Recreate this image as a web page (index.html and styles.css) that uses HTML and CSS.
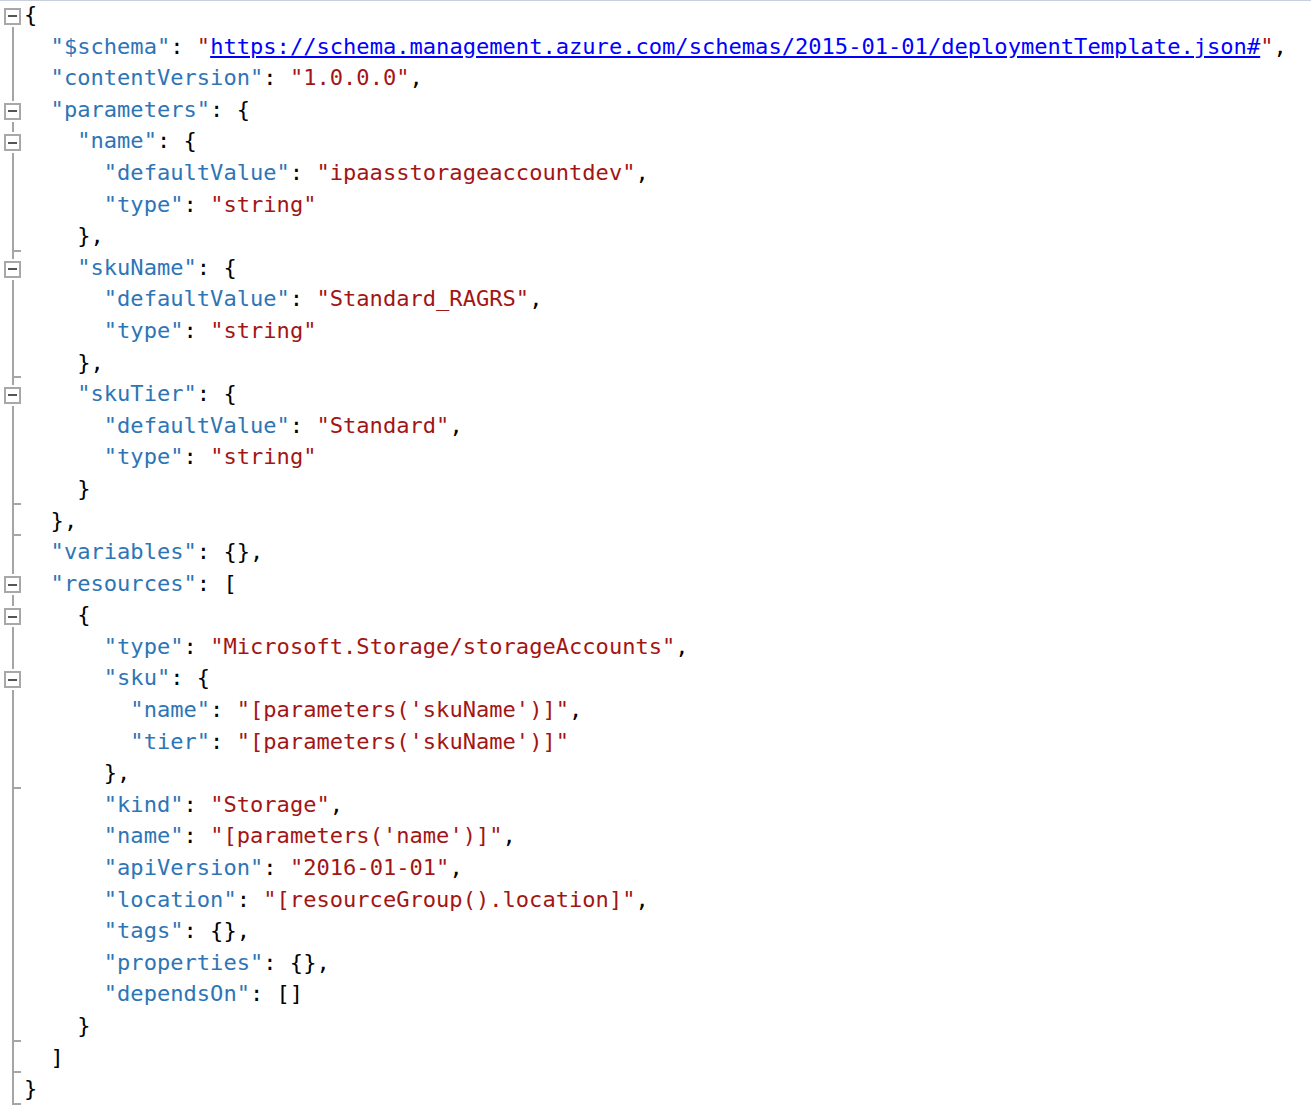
FILE: index.html
```html
<!DOCTYPE html>
<html>
<head>
<meta charset="utf-8">
<link rel="stylesheet" href="styles.css">
</head>
<body>
<div class="editor">
<div class="line"><span class="g first"><i class="box"></i></span><span class="code">{</span></div>
<div class="line"><span class="g bar"></span><span class="code">  <span class="k">"$schema"</span>: <span class="s">"<span class="u">https://schema.management.azure.com/schemas/2015-01-01/deploymentTemplate.json#</span>"</span>,</span></div>
<div class="line"><span class="g bar"></span><span class="code">  <span class="k">"contentVersion"</span>: <span class="s">"1.0.0.0"</span>,</span></div>
<div class="line"><span class="g bar"><i class="box"></i></span><span class="code">  <span class="k">"parameters"</span>: {</span></div>
<div class="line"><span class="g bar"><i class="box"></i></span><span class="code">    <span class="k">"name"</span>: {</span></div>
<div class="line"><span class="g bar"></span><span class="code">      <span class="k">"defaultValue"</span>: <span class="s">"ipaasstorageaccountdev"</span>,</span></div>
<div class="line"><span class="g bar"></span><span class="code">      <span class="k">"type"</span>: <span class="s">"string"</span></span></div>
<div class="line"><span class="g end"></span><span class="code">    },</span></div>
<div class="line"><span class="g bar"><i class="box"></i></span><span class="code">    <span class="k">"skuName"</span>: {</span></div>
<div class="line"><span class="g bar"></span><span class="code">      <span class="k">"defaultValue"</span>: <span class="s">"Standard_RAGRS"</span>,</span></div>
<div class="line"><span class="g bar"></span><span class="code">      <span class="k">"type"</span>: <span class="s">"string"</span></span></div>
<div class="line"><span class="g end"></span><span class="code">    },</span></div>
<div class="line"><span class="g bar"><i class="box"></i></span><span class="code">    <span class="k">"skuTier"</span>: {</span></div>
<div class="line"><span class="g bar"></span><span class="code">      <span class="k">"defaultValue"</span>: <span class="s">"Standard"</span>,</span></div>
<div class="line"><span class="g bar"></span><span class="code">      <span class="k">"type"</span>: <span class="s">"string"</span></span></div>
<div class="line"><span class="g end"></span><span class="code">    }</span></div>
<div class="line"><span class="g end"></span><span class="code">  },</span></div>
<div class="line"><span class="g bar"></span><span class="code">  <span class="k">"variables"</span>: {},</span></div>
<div class="line"><span class="g bar"><i class="box"></i></span><span class="code">  <span class="k">"resources"</span>: [</span></div>
<div class="line"><span class="g bar"><i class="box"></i></span><span class="code">    {</span></div>
<div class="line"><span class="g bar"></span><span class="code">      <span class="k">"type"</span>: <span class="s">"Microsoft.Storage/storageAccounts"</span>,</span></div>
<div class="line"><span class="g bar"><i class="box"></i></span><span class="code">      <span class="k">"sku"</span>: {</span></div>
<div class="line"><span class="g bar"></span><span class="code">        <span class="k">"name"</span>: <span class="s">"[parameters('skuName')]"</span>,</span></div>
<div class="line"><span class="g bar"></span><span class="code">        <span class="k">"tier"</span>: <span class="s">"[parameters('skuName')]"</span></span></div>
<div class="line"><span class="g end"></span><span class="code">      },</span></div>
<div class="line"><span class="g bar"></span><span class="code">      <span class="k">"kind"</span>: <span class="s">"Storage"</span>,</span></div>
<div class="line"><span class="g bar"></span><span class="code">      <span class="k">"name"</span>: <span class="s">"[parameters('name')]"</span>,</span></div>
<div class="line"><span class="g bar"></span><span class="code">      <span class="k">"apiVersion"</span>: <span class="s">"2016-01-01"</span>,</span></div>
<div class="line"><span class="g bar"></span><span class="code">      <span class="k">"location"</span>: <span class="s">"[resourceGroup().location]"</span>,</span></div>
<div class="line"><span class="g bar"></span><span class="code">      <span class="k">"tags"</span>: {},</span></div>
<div class="line"><span class="g bar"></span><span class="code">      <span class="k">"properties"</span>: {},</span></div>
<div class="line"><span class="g bar"></span><span class="code">      <span class="k">"dependsOn"</span>: []</span></div>
<div class="line"><span class="g end"></span><span class="code">    }</span></div>
<div class="line"><span class="g end"></span><span class="code">  ]</span></div>
<div class="line"><span class="g end"></span><span class="code">}</span></div>
</div>
</body>
</html>
```

FILE: styles.css
```css
html, body {
  margin: 0;
  padding: 0;
  background: #ffffff;
}
body {
  border-top: 1px solid #c9cfdb;
}
.editor {
  margin-top: -2px;
  font-family: "DejaVu Sans Mono", "Liberation Mono", monospace;
  font-size: 22.08px;
  color: #000000;
}
.line {
  display: flex;
  height: 31.6px;
  line-height: 31.6px;
}
.g {
  flex: 0 0 24px;
  display: flex;
  align-items: center;
  justify-content: flex-start;
  padding-top: 3px;
  box-sizing: border-box;
}
.g.bar {
  background: linear-gradient(#a5a5a5, #a5a5a5) no-repeat 12px 0 / 2px 100%;
}
.g.first {
  background: linear-gradient(#a5a5a5, #a5a5a5) no-repeat 12px 100% / 2px 50%;
}
.g.end {
  background:
    linear-gradient(#a5a5a5, #a5a5a5) no-repeat 12px 100% / 9px 2px,
    linear-gradient(#a5a5a5, #a5a5a5) no-repeat 12px 0 / 2px 100%;
}
.box {
  display: flex;
  align-items: center;
  justify-content: center;
  margin-left: 4px;
  width: 17px;
  height: 17px;
  box-sizing: border-box;
  border: 2px solid #a8a8a8;
  background: #ffffff;
  box-shadow: 0 0 0 2px #ffffff;
}
.box::before {
  content: "";
  width: 9px;
  height: 2px;
  background: #555555;
}
.code {
  white-space: pre;
  padding-left: 0;
}
.k { color: #2e75b6; }
.s { color: #a31515; }
.u { color: #0000ff; text-decoration: underline; }
```
